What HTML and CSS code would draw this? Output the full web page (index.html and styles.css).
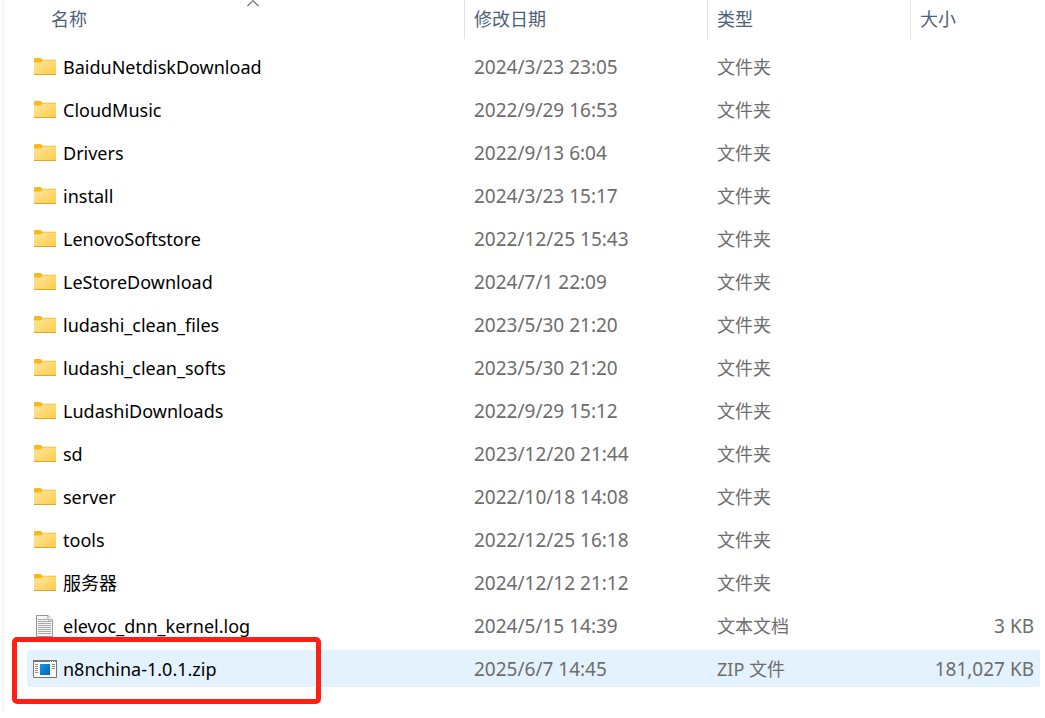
FILE: index.html
```html
<!DOCTYPE html>
<html lang="zh-CN">
<head>
<meta charset="utf-8">
<title>文件列表</title>
<link rel="stylesheet" href="styles.css">
</head>
<body>
<svg class="defs" width="0" height="0" aria-hidden="true">
  <defs>
    <linearGradient id="gold" x1="0" y1="0" x2="1" y2="1">
      <stop offset="0" stop-color="#ffe7a0"/><stop offset="1" stop-color="#fecb45"/>
    </linearGradient>
    <linearGradient id="blue" x1="0" y1="0" x2="1" y2="1">
      <stop offset="0" stop-color="#1496e6"/><stop offset="1" stop-color="#0a64b8"/>
    </linearGradient>
    <symbol id="folder" viewBox="0 0 22 17">
      <path d="M0 1.2Q0 0 1.2 0H6.6L8.4 1.8H22V7H0Z" fill="#fcb71c"/>
      <path d="M0 4.4H7L9 2.6H22V16.4Q22 17 21.4 17H.6Q0 17 0 16.4Z" fill="url(#gold)"/>
      <path d="M0 16H22V16.4Q22 17 21.4 17H.6Q0 17 0 16.4Z" fill="#e3a52c"/>
    </symbol>
    <symbol id="doc" viewBox="0 0 17 22">
      <path d="M.5.5H12L16.5 5V21.5H.5Z" fill="#f6f6f6" stroke="#979593"/>
      <path d="M12 .5V5H16.5" fill="#fff" stroke="#979593"/>
      <path d="M2 4.5H11M2 6.5H15M2 8.5H15M2 10.5H15M2 12.5H15M2 14.5H15M2 16.5H15M2 18.5H15" stroke="#a8a8a8"/>
    </symbol>
    <symbol id="app" viewBox="0 0 24 18">
      <path d="M.5.5H23.5V17.5H.5Z" fill="#f8f8f8" stroke="#797472"/>
      <path d="M0 0H24V2H0Z" fill="#797472"/>
      <path d="M17 1.5H18M19 1.5H20M21 1.5H22" stroke="#eee"/>
      <path d="M2 4.5H5M2 6.5H5M2 8.5H5M2 10.5H5M2 12.5H5M19 4.5H22M19 6.5H22M19 8.5H22" stroke="#918d8a"/>
      <path d="M7 4H17V15H7Z" fill="url(#blue)"/>
    </symbol>
  </defs>
</svg>
<main class="pane">
<table class="files">
  <colgroup><col class="col-name"><col class="col-date"><col class="col-type"><col></colgroup>
  <thead>
    <tr>
      <th class="first" aria-sort="ascending"><button type="button" class="head">名称</button><svg class="sort" width="12" height="7" viewBox="0 0 12 7" aria-hidden="true"><path d="M.5 6L6 .7L11.5 6" fill="none" stroke="#666" stroke-width="1.1"/></svg></th>
      <th><button type="button" class="head">修改日期</button></th>
      <th><button type="button" class="head">类型</button></th>
      <th><button type="button" class="head">大小</button></th>
    </tr>
  </thead>
  <tbody>
    <tr><td><span class="name"><svg class="folder"><use href="#folder"/></svg>BaiduNetdiskDownload</span></td><td>2024/3/23 23:05</td><td class="zh">文件夹</td><td></td></tr>
    <tr><td><span class="name"><svg class="folder"><use href="#folder"/></svg>CloudMusic</span></td><td>2022/9/29 16:53</td><td class="zh">文件夹</td><td></td></tr>
    <tr><td><span class="name"><svg class="folder"><use href="#folder"/></svg>Drivers</span></td><td>2022/9/13 6:04</td><td class="zh">文件夹</td><td></td></tr>
    <tr><td><span class="name"><svg class="folder"><use href="#folder"/></svg>install</span></td><td>2024/3/23 15:17</td><td class="zh">文件夹</td><td></td></tr>
    <tr><td><span class="name"><svg class="folder"><use href="#folder"/></svg>LenovoSoftstore</span></td><td>2022/12/25 15:43</td><td class="zh">文件夹</td><td></td></tr>
    <tr><td><span class="name"><svg class="folder"><use href="#folder"/></svg>LeStoreDownload</span></td><td>2024/7/1 22:09</td><td class="zh">文件夹</td><td></td></tr>
    <tr><td><span class="name"><svg class="folder"><use href="#folder"/></svg>ludashi_clean_files</span></td><td>2023/5/30 21:20</td><td class="zh">文件夹</td><td></td></tr>
    <tr><td><span class="name"><svg class="folder"><use href="#folder"/></svg>ludashi_clean_softs</span></td><td>2023/5/30 21:20</td><td class="zh">文件夹</td><td></td></tr>
    <tr><td><span class="name"><svg class="folder"><use href="#folder"/></svg>LudashiDownloads</span></td><td>2022/9/29 15:12</td><td class="zh">文件夹</td><td></td></tr>
    <tr><td><span class="name"><svg class="folder"><use href="#folder"/></svg>sd</span></td><td>2023/12/20 21:44</td><td class="zh">文件夹</td><td></td></tr>
    <tr><td><span class="name"><svg class="folder"><use href="#folder"/></svg>server</span></td><td>2022/10/18 14:08</td><td class="zh">文件夹</td><td></td></tr>
    <tr><td><span class="name"><svg class="folder"><use href="#folder"/></svg>tools</span></td><td>2022/12/25 16:18</td><td class="zh">文件夹</td><td></td></tr>
    <tr><td><span class="name"><svg class="folder"><use href="#folder"/></svg>服务器</span></td><td>2024/12/12 21:12</td><td class="zh">文件夹</td><td></td></tr>
    <tr><td><span class="name"><svg class="doc"><use href="#doc"/></svg>elevoc_dnn_kernel.log</span></td><td>2024/5/15 14:39</td><td class="zh">文本文档</td><td class="size">3 KB</td></tr>
    <tr class="selected"><td><span class="name"><svg class="app"><use href="#app"/></svg>n8nchina-1.0.1.zip</span><span class="callout"></span></td><td>2025/6/7 14:45</td><td class="zh">ZIP 文件</td><td class="size">181,027 KB</td></tr>
  </tbody>
</table>
</main>
</body>
</html>
```
FILE: styles.css
```css
* { box-sizing: border-box; }
body {
  margin: 0;
  background: #fff;
  color: #6d6d6d;
  font: 19px/26px "Noto Sans", "Noto Sans CJK SC", sans-serif;
}
.defs { position: absolute; }
.pane {
  min-height: 100vh;
  margin-left: 2px;
  padding: 0 5px 0 23px;
  border-left: 2px solid #f7f7f7;
}
.files {
  width: 100%;
  margin-top: -6px;
  table-layout: fixed;
  border-collapse: separate;
  border-spacing: 0 6px;
}
.col-name { width: 437px; }
.col-date { width: 243px; }
.col-type { width: 203px; }
th {
  position: relative;
  height: 42px;
  padding: 0 0 3px;
  vertical-align: top;
}
.head {
  display: block;
  width: 100%;
  height: 39px;
  padding: 0 9px 4px;
  border: 0;
  border-left: 1px solid #e2e2e2;
  background: none;
  color: #4c607a;
  font: 18px/26px "Noto Sans CJK SC", sans-serif;
  text-align: left;
}
.first .head { padding-left: 24px; border-left: 0; }
.sort { position: absolute; top: 0; left: 220px; }
td {
  position: relative;
  height: 37px;
  padding: 0 6px 0 10px;
  white-space: nowrap;
}
td:first-child { padding-left: 6px; color: #000; font-size: 18px; }
.zh { font-size: 18px; }
.size { text-align: right; }
.name { display: flex; align-items: center; }
.name svg { flex: none; }
.folder { width: 22px; height: 17px; margin: 0 7px 0 1px; }
.doc { width: 17px; height: 22px; margin: 0 10px 0 3px; }
.app { width: 24px; height: 18px; margin-right: 6px; }
.selected td { background: #e4f2fe; }
.selected td:first-child { border-radius: 3px 0 0 3px; }
.selected td:last-child { border-radius: 0 3px 3px 0; }
.callout {
  position: absolute;
  top: -13px;
  left: -15px;
  bottom: -17px;
  width: 309px;
  border: 5px solid #ff2015;
  border-radius: 5px;
  pointer-events: none;
}
```
